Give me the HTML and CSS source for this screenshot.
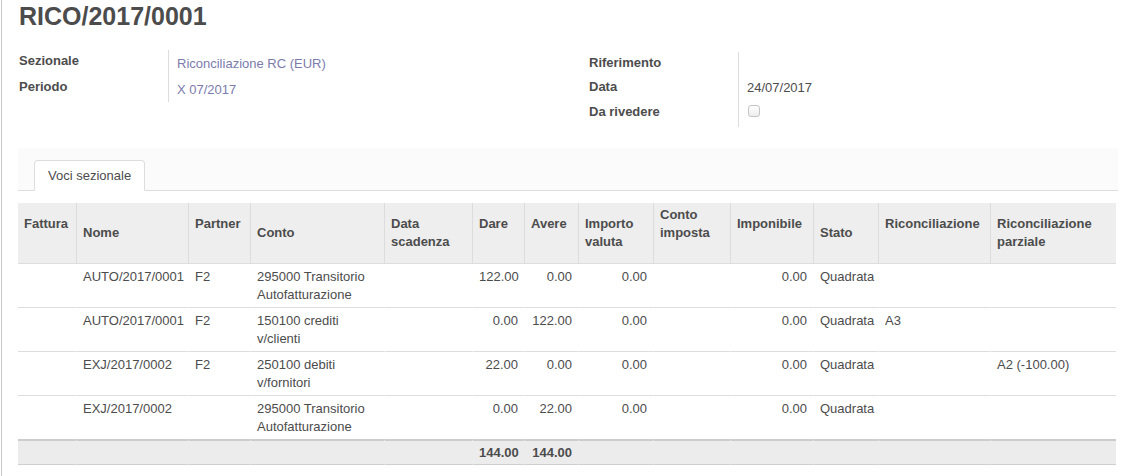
FILE: index.html
```html
<!DOCTYPE html>
<html>
<head>
<meta charset="utf-8">
<link rel="stylesheet" href="styles.css">
</head>
<body>
<div class="page">
  <h1 class="title">RICO/2017/0001</h1>
  <div class="groups">
    <div class="group group-left">
      <div class="lbl">Sezionale</div><div class="val link">Riconciliazione RC (EUR)</div>
      <div class="lbl">Periodo</div><div class="val link">X 07/2017</div>
    </div>
    <div class="group group-right">
      <div class="lbl">Riferimento</div><div class="val"></div>
      <div class="lbl">Data</div><div class="val val-data">24/07/2017</div>
      <div class="lbl">Da rivedere</div><div class="val val-check"><span class="checkbox"></span></div>
    </div>
  </div>
  <div class="notebook">
    <div class="tab">Voci sezionale</div>
  </div>
  <table class="list">
    <colgroup>
      <col class="c58"><col class="c112"><col class="c62"><col class="c134"><col class="c88"><col class="c52"><col class="c54"><col class="c75"><col class="c77"><col class="c83"><col class="c65"><col class="c112"><col class="c126">
    </colgroup>
    <thead>
      <tr>
        <th class="up">Fattura</th>
        <th>Nome</th>
        <th class="up">Partner</th>
        <th>Conto</th>
        <th>Data scadenza</th>
        <th class="up">Dare</th>
        <th class="up">Avere</th>
        <th>Importo valuta</th>
        <th class="up">Conto imposta</th>
        <th class="up">Imponibile</th>
        <th>Stato</th>
        <th class="up">Riconciliazione</th>
        <th>Riconciliazione parziale</th>
      </tr>
    </thead>
    <tbody>
      <tr>
        <td></td><td>AUTO/2017/0001</td><td>F2</td><td>295000 Transitorio Autofatturazione</td><td></td>
        <td class="num">122.00</td><td class="num">0.00</td><td class="num">0.00</td><td></td><td class="num">0.00</td><td>Quadrata</td><td></td><td></td>
      </tr>
      <tr>
        <td></td><td>AUTO/2017/0001</td><td>F2</td><td>150100 crediti v/clienti</td><td></td>
        <td class="num">0.00</td><td class="num">122.00</td><td class="num">0.00</td><td></td><td class="num">0.00</td><td>Quadrata</td><td>A3</td><td></td>
      </tr>
      <tr>
        <td></td><td>EXJ/2017/0002</td><td>F2</td><td>250100 debiti v/fornitori</td><td></td>
        <td class="num">22.00</td><td class="num">0.00</td><td class="num">0.00</td><td></td><td class="num">0.00</td><td>Quadrata</td><td></td><td>A2 (-100.00)</td>
      </tr>
      <tr>
        <td></td><td>EXJ/2017/0002</td><td></td><td>295000 Transitorio Autofatturazione</td><td></td>
        <td class="num">0.00</td><td class="num">22.00</td><td class="num">0.00</td><td></td><td class="num">0.00</td><td>Quadrata</td><td></td><td></td>
      </tr>
    </tbody>
    <tfoot>
      <tr>
        <td></td><td></td><td></td><td></td><td></td>
        <td class="num">144.00</td><td class="num">144.00</td><td></td><td></td><td></td><td></td><td></td><td></td>
      </tr>
    </tfoot>
  </table>
</div>
</body>
</html>
```

FILE: styles.css
```css
html, body {
  margin: 0;
  padding: 0;
  background: #ffffff;
}

body {
  font-family: "Liberation Sans", Arial, sans-serif;
  font-size: 13px;
  line-height: 18px;
  color: #4c4c4c;
}

.page {
  margin-left: 1px;
  border-left: 1px solid #c8c8c8;
  min-height: 476px;
  box-sizing: border-box;
  padding: 1px 8px 0 16px;
}

.title {
  margin: 0;
  padding-left: 1px;
  font-size: 25px;
  line-height: 30px;
  font-weight: bold;
  color: #4c4c4c;
}

.groups {
  display: grid;
  grid-template-columns: 550px 550px;
  margin-top: 19px;
}

.group {
  display: grid;
  grid-template-columns: 150px 1fr;
  align-content: start;
}

.group-left {
  grid-auto-rows: 26px;
}

.group-right {
  margin-top: 2px;
  padding-left: 20px;
  grid-template-rows: 24px 25px 26px;
}

.lbl {
  font-weight: bold;
  padding: 2px 0 0 1px;
  white-space: nowrap;
}

.val {
  border-left: 1px solid #dddddd;
  padding: 5px 0 0 8px;
  white-space: nowrap;
}

.group-right .val {
  padding-top: 3px;
}

.group-right .val-check {
  padding-top: 4px;
}

.link {
  color: #7c7bad;
}

.checkbox {
  display: block;
  width: 10px;
  height: 10px;
  margin-left: 1px;
  border: 1px solid #c4c4c4;
  border-radius: 3px;
  background: linear-gradient(#ffffff, #ededed);
}

.notebook {
  margin-top: 21px;
  width: 1100px;
  background: #fbfbfb;
  border-bottom: 1px solid #dddddd;
  padding: 12px 0 0 16px;
  box-sizing: border-box;
  display: flex;
}

.tab {
  background: #ffffff;
  border: 1px solid #dddddd;
  border-bottom: 1px solid #ffffff;
  border-radius: 4px 4px 0 0;
  padding: 6px 13px 5px;
  margin-bottom: -1px;
  line-height: 18px;
}

.list {
  margin-top: 12px;
  width: 1098px;
  table-layout: fixed;
  border-collapse: separate;
  border-spacing: 0;
}

.c52 { width: 52px; }
.c54 { width: 54px; }
.c58 { width: 58px; }
.c62 { width: 62px; }
.c65 { width: 65px; }
.c75 { width: 75px; }
.c77 { width: 77px; }
.c83 { width: 83px; }
.c88 { width: 88px; }
.c112 { width: 112px; }
.c126 { width: 126px; }
.c134 { width: 134px; }

.list thead tr {
  height: 61px;
}

.list th {
  background: #eeeeee;
  font-weight: bold;
  text-align: left;
  vertical-align: middle;
  padding: 3px 6px;
  border-bottom: 1px solid #dddddd;
  border-left: 1px solid #dcdcdc;
  line-height: 18px;
}

.list th:first-child,
.list td:first-child {
  border-left: none;
}

.list th.up {
  padding-bottom: 21px;
}

.list td {
  padding: 4px 6px 3px;
  vertical-align: top;
  border-left: 1px solid transparent;
  border-bottom: 1px solid #dddddd;
  line-height: 18px;
}

.list tbody tr:last-child td {
  border-bottom: none;
}

.list td.num {
  text-align: right;
}

.list tfoot td {
  background: #ececec;
  border-top: 2px solid #cccccc;
  border-bottom: 1px solid #cfcfcf;
  padding: 3px 6px 2px;
  font-weight: bold;
}
```
